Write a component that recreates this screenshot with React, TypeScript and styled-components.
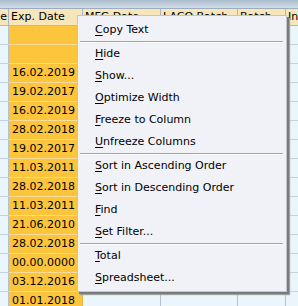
import styled, { createGlobalStyle } from "styled-components";

const GlobalStyle = createGlobalStyle`
  html, body {
    margin: 0;
    padding: 0;
    background: #eaf5fc;
  }
  body {
    font-family: "DejaVu Sans", Verdana, sans-serif;
    font-size: 11px;
    color: #000;
  }
`;

//layout
const Screen = styled.div`
  position: relative;
  width: 298px;
  height: 306px;
  overflow: hidden;
  background: #eaf5fc;
`;
const TopBar = styled.div`
  height: 8px;
  background: linear-gradient(#a9bbcc, #d3dde7);
  border-bottom: 1px solid #9badbf;
`;
const Table = styled.div`
  display: grid;
  grid-template-columns: 9px 74px 78px 77px 48px 61px;
`;
const HeaderCell = styled.div<{ $right?: boolean }>`
  height: 16px;
  line-height: 16px;
  background: #f6e6ba;
  border-right: 1px solid #a9b6c3;
  border-bottom: 1px solid #c8b98c;
  padding: ${p => (p.$right ? "0 1px 0 0" : "0 0 0 2px")};
  text-align: ${p => (p.$right ? "right" : "left")};
  white-space: nowrap;
  overflow: hidden;
`;
const Cell = styled.div<{ $key?: boolean }>`
  height: 18px;
  line-height: 18px;
  padding-left: 3px;
  background: ${p => (p.$key ? "#fdc53c" : "#eaf5fc")};
  border-right: 1px solid ${p => (p.$key ? "#e2b64c" : "#b4c2cf")};
  border-bottom: 1px solid ${p => (p.$key ? "#f7dc9c" : "#c6d2de")};
  white-space: nowrap;
  overflow: hidden;
`;

//menu
const Menu = styled.div`
  position: absolute;
  left: 77px;
  top: 15px;
  width: 208px;
  padding: 3px 0 2px;
  background: #f1f2f7;
  border: 1px solid #c4c4c8;
  box-shadow: 2px 2px 0 #7a7a7a, 3px 3px 1px #a0a0a0;
`;
const MenuItem = styled.div`
  height: 22px;
  line-height: 22px;
  padding-left: 17px;
  white-space: nowrap;
`;
const Key = styled.span`
  text-decoration: underline;
  text-underline-offset: 2px;
`;
const Separator = styled.div`
  height: 1px;
  margin: 0 3px 0 2px;
  background: #a2a2a2;
  border-bottom: 1px solid #ffffff;
`;

const headers = ["e", "Exp. Date", "MFG Date", "LACO Batch", "Batch", "In"];

const dates = [
  "",
  "",
  "16.02.2019",
  "19.02.2017",
  "16.02.2019",
  "28.02.2018",
  "19.02.2017",
  "11.03.2011",
  "28.02.2018",
  "11.03.2011",
  "21.06.2010",
  "28.02.2018",
  "00.00.0000",
  "03.12.2016",
  "01.01.2018",
];

type Entry = { key: string; rest: string } | "sep";

const entries: Entry[] = [
  { key: "C", rest: "opy Text" },
  "sep",
  { key: "H", rest: "ide" },
  { key: "S", rest: "how..." },
  { key: "O", rest: "ptimize Width" },
  { key: "F", rest: "reeze to Column" },
  { key: "U", rest: "nfreeze Columns" },
  "sep",
  { key: "S", rest: "ort in Ascending Order" },
  { key: "S", rest: "ort in Descending Order" },
  { key: "F", rest: "ind" },
  { key: "S", rest: "et Filter..." },
  "sep",
  { key: "T", rest: "otal" },
  { key: "S", rest: "preadsheet..." },
];

function App() {
  return (
    <>
      <GlobalStyle />
      <Screen>
        <TopBar />
        <Table>
          {headers.map((h, i) => (
            <HeaderCell key={"h" + i} $right={i === 0}>
              {h}
            </HeaderCell>
          ))}
          {dates.map((d, r) => (
            <>
              <Cell key={"a" + r} />
              <Cell key={"b" + r} $key>
                {d}
              </Cell>
              <Cell key={"c" + r} />
              <Cell key={"d" + r} />
              <Cell key={"e" + r} />
              <Cell key={"f" + r} />
            </>
          ))}
        </Table>
        <Menu>
          {entries.map((e, i) =>
            e === "sep" ? (
              <Separator key={i} />
            ) : (
              <MenuItem key={i}>
                <Key>{e.key}</Key>
                {e.rest}
              </MenuItem>
            )
          )}
        </Menu>
      </Screen>
    </>
  );
}

export default App;
